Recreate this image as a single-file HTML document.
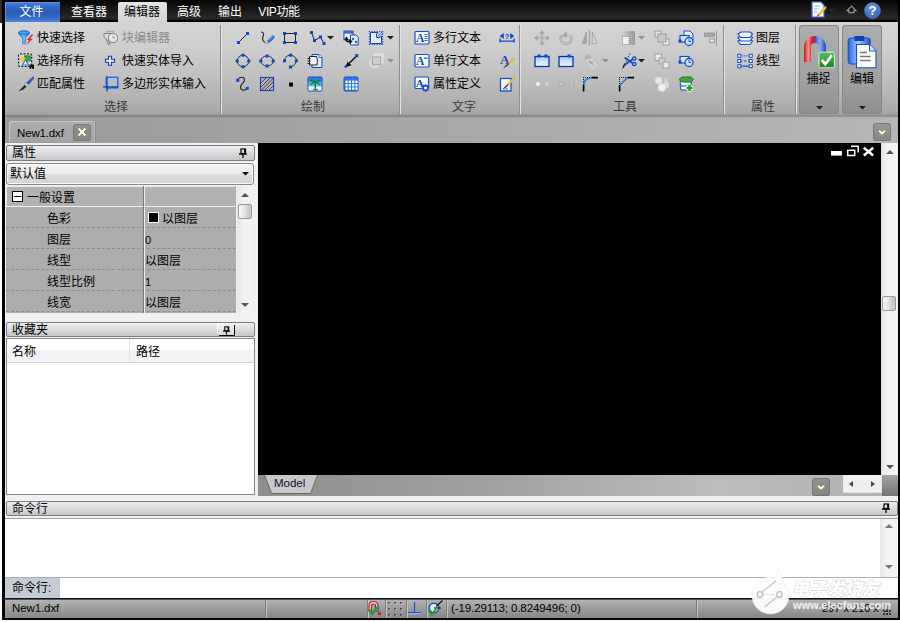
<!DOCTYPE html>
<html lang="zh"><head><meta charset="utf-8"><title>New1.dxf</title>
<style>
html,body{margin:0;padding:0;background:#fff;}
body{width:900px;height:622px;position:relative;overflow:hidden;font-family:"Liberation Sans","Noto Sans CJK SC",sans-serif;font-size:12px;color:#000;}
.a{position:absolute;}
svg{position:absolute;overflow:visible;}
#frame{left:2px;top:0;width:898px;height:620px;background:#000;}
#title{left:5px;top:0;width:893px;height:22px;background:linear-gradient(#050505,#161616 40%,#2a2a2a 85%,#000 95%);}
.tab{top:2px;height:20px;line-height:21px;color:#fff;text-align:center;font-size:12px;}
#ribbon{left:5px;top:22px;width:893px;height:94px;background:linear-gradient(#d4d4d4,#cecece 28%,#bcbcbc 65%,#a9a9a9 95%,#9a9a9a);box-shadow:inset 0 -1px 0 #8a8a8a;}
#docbar{left:5px;top:116px;width:893px;height:27px;background:linear-gradient(rgba(0,0,0,.22),rgba(0,0,0,0) 7%),linear-gradient(90deg,#9a9a9a,#a6a6a6 45%,#b6b6b6);}
.sep{top:25px;width:1px;height:89px;background:#8e8e8e;box-shadow:1px 0 0 #e2e2e2;}
.rt{height:16px;line-height:16px;font-size:12px;white-space:nowrap;}
.gl{top:100px;height:15px;line-height:15px;font-size:12px;color:#3a3a3a;text-align:center;width:60px;margin-left:-30px;}
.big{top:25px;width:40px;height:89px;border-radius:4px;background:linear-gradient(#adadad,#a2a2a2 60%,#8f8f8f);box-shadow:inset 0 0 0 1px #888;}
.hdr{height:14px;line-height:14px;background:linear-gradient(#ededed,#dcdee0 45%,#c3c6ca);border:1px solid #7d7d7d;border-radius:2px;font-size:12px;padding-left:5px;box-sizing:content-box;}
#main{left:5px;top:143px;width:893px;height:455px;background:#f0f0f0;}
.row{left:7px;width:229px;height:20px;background:#adadad;border-bottom:1px dashed #8c8c8c;}
.pl{left:47px;font-size:12px;height:20px;line-height:20px;}
.pv{left:145px;font-size:12px;height:20px;line-height:20px;}
.sb{background:#f0f0f0;}
.arr{width:0;height:0;border:4px solid transparent;}

</style></head><body>
<div id="frame" class="a"></div>
<div id="title" class="a"></div>
<div class="a" style="left:0;top:0;width:2px;height:23px;background:#2e2e2e"></div>
<div class="a tab" style="left:5px;width:55px;height:20px;background:linear-gradient(#4582de,#3269c4 25%,#2a5cb2 55%,#3a72cc 85%,#4e88de);box-shadow:inset 1px 1px 0 #5a92e8;text-indent:-2px">文件</div>
<div class="a tab" style="left:64px;width:50px;">查看器</div>
<div class="a tab" style="left:118px;width:49px;text-indent:-1px;background:linear-gradient(#e4e4e4,#d3d3d3);color:#000;border-radius:2px 2px 0 0;">编辑器</div>
<div class="a tab" style="left:170px;width:38px;">高级</div>
<div class="a tab" style="left:212px;width:36px;">输出</div>
<div class="a tab" style="left:255px;width:48px;letter-spacing:-.4px">VIP功能</div>
<svg style="left:809px;top:1px" width="18" height="18" viewBox="0 0 18 18" preserveAspectRatio="none"><path d="M3 1H12L15 4V16H3Z" fill="#f8fbff" stroke="#3a6ae0" stroke-width="1.2"/><path d="M5 5H11M5 8H10M5 11H8" stroke="#9ab8f0" stroke-width="1"/><path d="M16.5 5L17.5 7L10.5 14.5L9 13Z" fill="#f4d020" stroke="#b89000" stroke-width=".4"/><path d="M9 13L10.5 14.5L7.5 16Z" fill="#e03020"/></svg>
<div class="a arr" style="left:828px;top:9px;border-width:3.5px;border-top-color:#2c2c2c"></div>
<svg style="left:846px;top:5px" width="11" height="9" viewBox="0 0 11 9" preserveAspectRatio="none"><path d="M1 5.6L5.5 1L10 5.6H8V7.6H3V5.6Z" fill="none" stroke="#959595" stroke-width="1.1" stroke-linejoin="miter"/></svg>
<svg style="left:863.5px;top:1.5px" width="17" height="17" viewBox="0 0 18 18" preserveAspectRatio="none"><defs><radialGradient id="hg" cx=".4" cy=".3" r=".8"><stop offset="0" stop-color="#6a98e0"/><stop offset="1" stop-color="#2f5cb8"/></radialGradient></defs><circle cx="9" cy="9" r="8.3" fill="url(#hg)" stroke="#5a8ae0" stroke-width=".8"/><text x="9" y="14" text-anchor="middle" font-family="Liberation Sans,sans-serif" font-weight="bold" font-size="14" fill="#fff">?</text></svg>
<div id="ribbon" class="a"></div>
<div id="docbar" class="a"></div>
<div class="a sep" style="left:220px"></div>
<div class="a sep" style="left:399px"></div>
<div class="a sep" style="left:519px"></div>
<div class="a sep" style="left:723px"></div>
<div class="a sep" style="left:795px"></div>
<svg style="left:18px;top:30px" width="16" height="16" viewBox="0 0 16 16" preserveAspectRatio="none"><defs><linearGradient id="fg" x1="0" x2="1"><stop offset="0" stop-color="#1d7fe0"/><stop offset=".5" stop-color="#6fc0ff"/><stop offset="1" stop-color="#1a62c8"/></linearGradient></defs><ellipse cx="6" cy="3" rx="5.5" ry="2.3" fill="#3aa0f0" stroke="#1560c0" stroke-width=".8"/><path d="M.8 3.6L4.6 8.5V13.5Q6 14.6 7.4 13.5V8.5L11.2 3.6Q6 6 .8 3.6Z" fill="url(#fg)" stroke="#1560c0" stroke-width=".6"/><path d="M13.5 4.5L8.8 10H11.2L8 15.5L14.8 8.8H12.2L15.3 4.5Z" fill="#e8232a"/></svg>
<div class="a rt" style="left:37px;top:29.5px;color:#000;font-size:12px;">快速选择</div>
<svg style="left:18px;top:53px" width="16" height="16" viewBox="0 0 16 16" preserveAspectRatio="none"><rect x=".6" y=".8" width="13" height="12.6" rx="1.5" fill="#d8d8d8" stroke="#222" stroke-width="1.2" stroke-dasharray="2 1.4"/><rect x="6.5" y="2.8" width="6" height="5.2" fill="#2fa84a" stroke="#1d7a30" stroke-width=".6"/><circle cx="4.8" cy="6.3" r="2.6" fill="#f5d020"/><path d="M4.5 12L7.5 6.5L10.5 12Z" fill="#fff" stroke="#2a78e0" stroke-width="1.2"/><path d="M11.5 11.5H16V16H14.8L13 14.2V16H11.5Z" fill="#111"/></svg>
<div class="a rt" style="left:37px;top:52.5px;color:#000;font-size:12px;">选择所有</div>
<svg style="left:18px;top:76px" width="16" height="16" viewBox="0 0 16 16" preserveAspectRatio="none"><path d="M15.2 .6L16 2.2L10.5 8.5L8.3 7Z" fill="#2e5fc4" stroke="#1a3d92" stroke-width=".5"/><path d="M8.3 7L10.5 8.5L8.5 10.5L6.5 9Z" fill="#cfd4dc" stroke="#777" stroke-width=".4"/><path d="M6.5 9L8.5 10.5Q6 14 .5 15.2Q3.5 12.5 6.5 9Z" fill="#2a2a2a"/></svg>
<div class="a rt" style="left:37px;top:75.5px;color:#000;font-size:12px;">匹配属性</div>
<svg style="left:103px;top:30px" width="16" height="16" viewBox="0 0 16 16" preserveAspectRatio="none"><path d="M1 3.5H8V7L5 8.5L7 14L5.5 14.8L3.5 9.5L1 7Z" fill="#dedede" stroke="#7e7e7e" stroke-width="1"/><circle cx="10" cy="8" r="4.6" fill="#e8e8e8" stroke="#8a8a8a" stroke-width="1.1"/><path d="M10 5.5V8H12" stroke="#9a9a9a" stroke-width="1" fill="none"/><path d="M3 1.5H11" stroke="#a8a8a8" stroke-width="1.4"/></svg>
<div class="a rt" style="left:122px;top:29.5px;color:#8a8a8a;font-size:12px;">块编辑器</div>
<svg style="left:103px;top:53px" width="16" height="16" viewBox="0 0 16 16" preserveAspectRatio="none"><path d="M5.5 3.2H8.5V6.2H11.5V9.2H8.5V12.2H5.5V9.2H2.5V6.2H5.5Z" fill="#eef3ff" stroke="#0f3cc0" stroke-width="1.15"/></svg>
<div class="a rt" style="left:122px;top:52.5px;color:#000;font-size:12px;">快速实体导入</div>
<svg style="left:103px;top:76px" width="16" height="16" viewBox="0 0 16 16" preserveAspectRatio="none"><rect x="3.3" y="1.3" width="11.4" height="10.6" fill="none" stroke="#2a6ae0" stroke-width="1.5"/><rect x="4.8" y="2.8" width="8.4" height="7.6" fill="none" stroke="#a8c8ff" stroke-width=".9"/><path d="M0 10.8H15.5M4 .5V15.5" stroke="#0f3cc0" stroke-width="1.2"/></svg>
<div class="a rt" style="left:122px;top:75.5px;color:#000;font-size:12px;">多边形实体输入</div>
<div class="a gl" style="left:116px">选择</div>
<div class="a gl" style="left:313px">绘制</div>
<div class="a gl" style="left:464px">文字</div>
<div class="a gl" style="left:625px">工具</div>
<div class="a gl" style="left:763px">属性</div>
<svg style="left:235px;top:30px" width="16" height="16" viewBox="0 0 16 16" preserveAspectRatio="none"><path d="M3.5 12.5L12.5 3.5" stroke="#222" stroke-width="1"/><rect x="2" y="11" width="3" height="3" fill="#0a46d8"/><rect x="11" y="2" width="3" height="3" fill="#0a46d8"/></svg>
<svg style="left:259px;top:30px" width="16" height="16" viewBox="0 0 16 16" preserveAspectRatio="none"><path d="M2 2Q6 2.5 4 6.5Q2.5 10 6 12.5" stroke="#222" stroke-width="1.1" fill="none"/><path d="M8 11.5L13.5 5L15.8 7L10 13.2Z" fill="#2a7ae8" stroke="#1850b8" stroke-width=".5"/><path d="M8 11.5L10 13.2L6.8 14.3Z" fill="#f4d0b0"/><path d="M7.6 12.8L8.8 13.8L6.8 14.3Z" fill="#e02020"/><path d="M10 9.5L13.8 5.3" stroke="#a8d0ff" stroke-width=".9"/></svg>
<svg style="left:282px;top:30px" width="16" height="16" viewBox="0 0 16 16" preserveAspectRatio="none"><rect x="2.5" y="3.5" width="11" height="9" fill="none" stroke="#222" stroke-width="1"/><rect x="1" y="2" width="3" height="3" fill="#0a46d8"/><rect x="12" y="2" width="3" height="3" fill="#0a46d8"/><rect x="1" y="11" width="3" height="3" fill="#0a46d8"/><rect x="12" y="11" width="3" height="3" fill="#0a46d8"/></svg>
<svg style="left:309px;top:30px" width="16" height="16" viewBox="0 0 16 16" preserveAspectRatio="none"><path d="M2.5 2.5L5.5 10.5L11.5 7L15 13.5" stroke="#222" stroke-width="1" fill="none"/><rect x="1" y="1" width="3" height="3" fill="#0a46d8"/><rect x="4" y="9" width="3" height="3" fill="#0a46d8"/><rect x="10" y="5.5" width="3" height="3" fill="#0a46d8"/><rect x="13.5" y="12" width="3" height="3" fill="#0a46d8"/></svg>
<svg style="left:326.5px;top:36px" width="7" height="4" viewBox="0 0 7 4" preserveAspectRatio="none"><path d="M0 0H7L3.5 3.5Z" fill="#1a1a1a"/></svg>
<svg style="left:343px;top:30px" width="16" height="16" viewBox="0 0 16 16" preserveAspectRatio="none"><rect x="1" y="1" width="9" height="9" fill="#eaf2ff" stroke="#1448c8" stroke-width="1"/><rect x="1" y="1" width="9" height="2.6" fill="#2a6ae0"/><rect x="8" y="1" width="2" height="2" fill="#e02020"/><path d="M7.5 5H13L15.2 7.2V15H7.5Z" fill="#f2f6ff" stroke="#1448c8" stroke-width="1"/><rect x="8.8" y="7.8" width="2.4" height="2.4" fill="#2a6ae0"/><rect x="11.8" y="10.8" width="2.4" height="2.4" fill="#2a6ae0"/><path d="M3.5 11.5V8M1.8 9.8L3.5 7.5L5.2 9.8M3.5 11.5H8M6.5 9.8L8.6 11.5L6.5 13.2" stroke="#111" stroke-width="1.3" fill="none"/></svg>
<svg style="left:368px;top:30px" width="16" height="16" viewBox="0 0 16 16" preserveAspectRatio="none"><path d="M2.5 2.5H10L8.5 4V7.5H12L13.5 6V13.5H2.5Z" fill="#e8f0ff" stroke="#1448c8" stroke-width="1"/><path d="M1 1.5H15M1 14.5H15M1.5 1V15M14.5 1V15" stroke="#1448c8" stroke-width="1.2" stroke-dasharray="1.2 1.3" fill="none"/><path d="M10 6L15 1M11.5 7L15.5 3" stroke="#2a6ae0" stroke-width=".9"/></svg>
<svg style="left:386.5px;top:36px" width="7" height="4" viewBox="0 0 7 4" preserveAspectRatio="none"><path d="M0 0H7L3.5 3.5Z" fill="#1a1a1a"/></svg>
<svg style="left:235px;top:53px" width="16" height="16" viewBox="0 0 16 16" preserveAspectRatio="none"><circle cx="8" cy="8" r="5.8" fill="none" stroke="#333" stroke-width="1"/><rect x="6.5" y="0.7" width="3" height="3" fill="#0a46d8"/><rect x="6.5" y="12.3" width="3" height="3" fill="#0a46d8"/><rect x="0.7" y="6.5" width="3" height="3" fill="#0a46d8"/><rect x="12.3" y="6.5" width="3" height="3" fill="#0a46d8"/></svg>
<svg style="left:259px;top:53px" width="16" height="16" viewBox="0 0 16 16" preserveAspectRatio="none"><ellipse cx="8" cy="8" rx="6.3" ry="5" fill="none" stroke="#333" stroke-width="1"/><rect x="6.5" y="1.5" width="3" height="3" fill="#0a46d8"/><rect x="6.5" y="11.5" width="3" height="3" fill="#0a46d8"/><rect x="0.3" y="6.5" width="3" height="3" fill="#0a46d8"/><rect x="12.7" y="6.5" width="3" height="3" fill="#0a46d8"/></svg>
<svg style="left:282px;top:53px" width="16" height="16" viewBox="0 0 16 16" preserveAspectRatio="none"><path d="M2.5 8Q3 2.2 8.5 2.2Q14.5 3 14.3 8Q13.5 12.5 8.5 14" fill="none" stroke="#333" stroke-width="1"/><rect x="1" y="6.3" width="3" height="3" fill="#0a46d8"/><rect x="7" y="0.7" width="3" height="3" fill="#0a46d8"/><rect x="12.8" y="6.3" width="3" height="3" fill="#0a46d8"/><rect x="7" y="12.5" width="3" height="3" fill="#0a46d8"/></svg>
<svg style="left:307px;top:53px" width="16" height="16" viewBox="0 0 16 16" preserveAspectRatio="none"><path d="M5 1.5H12L15 4.5V14.5H5Z" fill="#dfe9ff" stroke="#1448c8" stroke-width="1"/><path d="M12 1.5V4.5H15" fill="#fff" stroke="#1448c8" stroke-width=".8"/><path d="M2.5 3.5H9.5Q11 6.5 10 12H2.5Z" fill="#f4f4f4" stroke="#222" stroke-width="1"/><path d="M.5 5.5H3.5M.5 8H3.5M.5 10.5H3.5" stroke="#222" stroke-width="1.1"/></svg>
<svg style="left:343px;top:53px" width="16" height="16" viewBox="0 0 16 16" preserveAspectRatio="none"><path d="M3 13.5L13.5 3" stroke="#111" stroke-width="1.4"/><path d="M2.2 14.2L4.5 8.8L8.6 12.2Z" fill="#111"/><rect x="12.3" y="1.1" width="3" height="3" fill="#0a46d8"/><rect x="1.5" y="12.5" width="2.2" height="2.2" fill="#0a46d8"/></svg>
<svg style="left:368px;top:53px" width="16" height="16" viewBox="0 0 16 16" preserveAspectRatio="none"><rect x="6" y="1" width="9" height="9" fill="#d9d9d9" stroke="#e8e8e8" stroke-width="1"/><circle cx="6.5" cy="10" r="5" fill="#d2d2d2" stroke="#e4e4e4" stroke-width="1"/><rect x="4.5" y="4" width="8" height="7.5" fill="#cfcfcf" stroke="#a4a4a4" stroke-width=".9"/></svg>
<svg style="left:386.5px;top:59px" width="7" height="4" viewBox="0 0 7 4" preserveAspectRatio="none"><path d="M0 0H7L3.5 3.5Z" fill="#8f8f8f"/></svg>
<svg style="left:235px;top:76px" width="16" height="16" viewBox="0 0 16 16" preserveAspectRatio="none"><path d="M3 3.5Q4.5 .5 8 1.5Q11 3 8 7Q4.5 10 6 13Q8.5 15.5 11.5 13" fill="none" stroke="#222" stroke-width="1.1"/><rect x="1.2" y="2.8" width="3" height="3" fill="#0a46d8"/><rect x="10.8" y="10.8" width="3" height="3" fill="#0a46d8"/></svg>
<svg style="left:259px;top:76px" width="16" height="16" viewBox="0 0 16 16" preserveAspectRatio="none"><rect x="1.5" y="1.5" width="13" height="13" fill="#b4b4b4" stroke="#1448c8" stroke-width="1.2"/><path d="M2 7L7 2M2 11L11 2M2 14.5L14.5 2M5.5 14.5L14.5 5.5M9.5 14.5L14.5 9.5" stroke="#444" stroke-width="1"/></svg>
<svg style="left:283px;top:76px" width="16" height="16" viewBox="0 0 16 16" preserveAspectRatio="none"><rect x="6" y="6.5" width="4" height="4" fill="#000"/></svg>
<svg style="left:307px;top:76px" width="16" height="16" viewBox="0 0 16 16" preserveAspectRatio="none"><rect x="1" y="1" width="14" height="14" rx="1" fill="#2a8ae0" stroke="#1448c8" stroke-width="1"/><rect x="1.5" y="5" width="13" height="4.5" fill="#4fb0f0"/><rect x="1.5" y="9.5" width="13" height="2" fill="#a8dcf8"/><rect x="1.5" y="11" width="13" height="3.5" fill="#f2f8ff"/><path d="M8.3 6V13.5" stroke="#0f7a3a" stroke-width="1.5"/><path d="M8.3 5.5Q5 2 3 5Q6 4.5 8.3 6Q11 2.5 13.8 5.5Q10.5 4.5 8.3 6Q4 6 4 9Q6 6.5 8.3 6.3Q11 6.5 12.8 9.2Q12 6 8.3 5.8Z" fill="#0f8a3e" stroke="#0f7a3a" stroke-width=".8"/><path d="M6 13.8H11" stroke="#0f7a3a" stroke-width="1.2"/></svg>
<svg style="left:343px;top:76px" width="16" height="16" viewBox="0 0 16 16" preserveAspectRatio="none"><rect x="1" y="1" width="14" height="14" rx="1.5" fill="#2a7ae8" stroke="#1650c8" stroke-width="1"/><rect x="2.4" y="4.6" width="2.3" height="2.4" fill="#f4f8ff"/><rect x="2.4" y="8" width="2.3" height="2.4" fill="#f4f8ff"/><rect x="2.4" y="11.4" width="2.3" height="2.4" fill="#f4f8ff"/><rect x="5.7" y="4.6" width="2.3" height="2.4" fill="#f4f8ff"/><rect x="5.7" y="8" width="2.3" height="2.4" fill="#f4f8ff"/><rect x="5.7" y="11.4" width="2.3" height="2.4" fill="#f4f8ff"/><rect x="9" y="4.6" width="2.3" height="2.4" fill="#f4f8ff"/><rect x="9" y="8" width="2.3" height="2.4" fill="#f4f8ff"/><rect x="9" y="11.4" width="2.3" height="2.4" fill="#f4f8ff"/><rect x="12.3" y="4.6" width="2.3" height="2.4" fill="#f4f8ff"/><rect x="12.3" y="8" width="2.3" height="2.4" fill="#f4f8ff"/><rect x="12.3" y="11.4" width="2.3" height="2.4" fill="#f4f8ff"/></svg>
<svg style="left:414px;top:30px" width="16" height="16" viewBox="0 0 16 16" preserveAspectRatio="none"><rect x="1" y="1.5" width="14" height="12.5" rx="1" fill="#f4f8ff" stroke="#1650c8" stroke-width="1.2"/><text x="2" y="12.2" font-family="Liberation Serif,serif" font-weight="bold" font-size="11.5" fill="#1448b8">A</text><path d="M10.5 4.5H13.5M10.5 6.5H13.5M10.5 8.5H13.5M10.5 10.5H13.5" stroke="#2a6ae0" stroke-width="1"/></svg>
<div class="a rt" style="left:433px;top:29.5px;color:#000;font-size:12px;">多行文本</div>
<svg style="left:414px;top:53px" width="16" height="16" viewBox="0 0 16 16" preserveAspectRatio="none"><rect x="1" y="1.5" width="14" height="12.5" rx="1" fill="#f4f8ff" stroke="#1650c8" stroke-width="1.2"/><text x="2" y="12.2" font-family="Liberation Serif,serif" font-weight="bold" font-size="11.5" fill="#1448b8">A</text><path d="M10 5.2H13.5" stroke="#2a6ae0" stroke-width="1.4"/></svg>
<div class="a rt" style="left:433px;top:52.5px;color:#000;font-size:12px;">单行文本</div>
<svg style="left:414px;top:76px" width="16" height="16" viewBox="0 0 16 16" preserveAspectRatio="none"><rect x="1" y="1" width="13.5" height="11.5" rx="1" fill="#f4f8ff" stroke="#1650c8" stroke-width="1.2"/><text x="1.8" y="10.8" font-family="Liberation Serif,serif" font-weight="bold" font-size="11" fill="#1448b8">A</text><circle cx="11.5" cy="12" r="2.4" fill="#fff" stroke="#1650c8" stroke-width="1.5"/><path d="M11.5 8V16M7.5 12H15.5M8.7 9.2L14.3 14.8M14.3 9.2L8.7 14.8" stroke="#1650c8" stroke-width="1.1"/><circle cx="11.5" cy="12" r="1.5" fill="#fff"/></svg>
<div class="a rt" style="left:433px;top:75.5px;color:#000;font-size:12px;">属性定义</div>
<svg style="left:499px;top:30px" width="16" height="16" viewBox="0 0 16 16" preserveAspectRatio="none"><path d="M1 8.5V12.6M15 8.5V12.6M1 11.2H15" stroke="#1448c8" stroke-width="1.3" fill="none"/><path d="M.6 6L4.8 3V9ZM15.4 6L11.2 3V9Z" fill="#1448c8"/><text x="8" y="8.8" text-anchor="middle" font-family="Liberation Sans,sans-serif" font-weight="bold" font-size="7.5" fill="#1448c8">?</text></svg>
<svg style="left:499px;top:53px" width="16" height="16" viewBox="0 0 16 16" preserveAspectRatio="none"><text x="1" y="11" font-family="Liberation Serif,serif" font-weight="bold" font-size="13" fill="#1448b8">A</text><path d="M15.3 4.5L16 6L10.5 11L9 9.8Z" fill="#f4d020" stroke="#b89000" stroke-width=".4"/><path d="M9 9.8L10.5 11L9.3 12L8 11Z" fill="#e03020"/><path d="M8 11L9.3 12Q7 14.5 4 15Q6 13 8 11Z" fill="#223a78"/></svg>
<svg style="left:499px;top:76px" width="16" height="16" viewBox="0 0 16 16" preserveAspectRatio="none"><rect x="1.5" y="2.5" width="10.5" height="12.5" fill="#f4f8ff" stroke="#1650c8" stroke-width="1.3"/><path d="M15 .8L16 2.5L10 9L8.5 7.7Z" fill="#f4d020" stroke="#b89000" stroke-width=".4"/><path d="M8.5 7.7L10 9L8.8 10L7.5 9Z" fill="#e03020"/><path d="M7.5 9L8.8 10Q6.5 12.5 3.5 13Q5.5 11 7.5 9Z" fill="#223a78"/><path d="M4 13H9" stroke="#1650c8" stroke-width=".8"/></svg>
<svg style="left:534px;top:30px" width="16" height="16" viewBox="0 0 16 16" preserveAspectRatio="none"><path d="M8 1.5V14.5M1.5 8H14.5M5.8 3.8L8 1.2L10.2 3.8M5.8 12.2L8 14.8L10.2 12.2M3.8 5.8L1.2 8L3.8 10.2M12.2 5.8L14.8 8L12.2 10.2" fill="none" stroke="#a2a2a2" stroke-width="1.2"/></svg>
<svg style="left:558px;top:30px" width="16" height="16" viewBox="0 0 16 16" preserveAspectRatio="none"><path d="M3.6 5.5Q1.5 9.5 4.3 12.4Q8 15.2 11.7 12.4Q14.5 9.5 12.4 5" fill="none" stroke="#a6a6a6" stroke-width="2.7"/><path d="M3.6 6.5L8.8 1L9.2 7Z" fill="#a6a6a6"/><path d="M3.6 5.5Q1.5 9.5 4.3 12.4Q8 15.2 11.7 12.4Q14.5 9.5 12.4 5" fill="none" stroke="#d4d4d4" stroke-width=".9"/></svg>
<svg style="left:582px;top:30px" width="16" height="16" viewBox="0 0 16 16" preserveAspectRatio="none"><path d="M7.3 0V15.8" stroke="#9c9c9c" stroke-width="1"/><path d="M4.3 2V13.6H.2Z" fill="#a4a4a4" stroke="#9a9a9a" stroke-width=".6"/><path d="M10.3 2V13.6H15Z" fill="#d6d6d6" stroke="#a0a0a0" stroke-width=".8"/></svg>
<svg style="left:620px;top:30px" width="16" height="16" viewBox="0 0 16 16" preserveAspectRatio="none"><defs><linearGradient id="gs" x1="0" x2="1"><stop offset="0" stop-color="#cfcfcf"/><stop offset="1" stop-color="#9a9a9a"/></linearGradient></defs><rect x="2" y="1" width="13" height="14" fill="url(#gs)"/><rect x="2.5" y="6.5" width="6.5" height="8" fill="#f2f2f2" stroke="#8a8a8a" stroke-width="1" stroke-dasharray="1 1"/></svg>
<svg style="left:637.5px;top:36px" width="7" height="4" viewBox="0 0 7 4" preserveAspectRatio="none"><path d="M0 0H7L3.5 3.5Z" fill="#8f8f8f"/></svg>
<svg style="left:654px;top:30px" width="16" height="16" viewBox="0 0 16 16" preserveAspectRatio="none"><rect x="1" y="1" width="6" height="6" fill="#e0e0e0" stroke="#9c9c9c" stroke-width="1"/><rect x="9" y="9" width="6" height="6" fill="#ececec" stroke="#9c9c9c" stroke-width="1"/><rect x="4" y="4" width="8" height="8" fill="#c8c8c8" stroke="#9c9c9c" stroke-width="1"/></svg>
<svg style="left:678px;top:30px" width="16" height="16" viewBox="0 0 16 16" preserveAspectRatio="none"><path d="M6 1H12L15 4V10H6Z" fill="#e4eeff" stroke="#1650c8" stroke-width="1"/><rect x="2" y="5.5" width="9" height="6.5" fill="#dce8ff" stroke="#1650c8" stroke-width="1.2"/><rect x=".5" y="9.5" width="3" height="3" fill="#1448c8"/><circle cx="11" cy="11.5" r="4" fill="#cfe0ff" stroke="#1650c8" stroke-width="1.3"/><path d="M11 9V11.5H13" stroke="#1650c8" stroke-width="1" fill="none"/></svg>
<svg style="left:702px;top:30px" width="16" height="16" viewBox="0 0 16 16" preserveAspectRatio="none"><path d="M14.5 .5V15.5" stroke="#9a9a9a" stroke-width="1"/><rect x="2.5" y="3" width="10" height="3.5" fill="#a6a6a6" stroke="#959595" stroke-width=".8"/><rect x="7.5" y="9" width="5" height="3.5" fill="#e0e0e0" stroke="#959595" stroke-width=".9"/></svg>
<svg style="left:534px;top:53px" width="16" height="16" viewBox="0 0 16 16" preserveAspectRatio="none"><defs><linearGradient id="br" x1="0" y1="0" x2="0" y2="1"><stop offset="0" stop-color="#a8ccff"/><stop offset="1" stop-color="#f2f7ff"/></linearGradient></defs><rect x="1" y="3.5" width="14" height="10" fill="url(#br)" stroke="#0a32b0" stroke-width="1.3"/><rect x="3.5" y="1.5" width="3" height="3" fill="#0a46d8"/><rect x="10.5" y="1.5" width="3" height="3" fill="#0a46d8"/></svg>
<svg style="left:558px;top:53px" width="16" height="16" viewBox="0 0 16 16" preserveAspectRatio="none"><rect x="1" y="3.5" width="14" height="10" fill="url(#br)" stroke="#0a32b0" stroke-width="1.3"/><rect x="9.5" y="1.5" width="3" height="3" fill="#0a46d8"/></svg>
<svg style="left:582px;top:53px" width="16" height="16" viewBox="0 0 16 16" preserveAspectRatio="none"><circle cx="6" cy="4.5" r="3.8" fill="#b4b4b4" stroke="#cdcdcd" stroke-width="1"/><path d="M4.5 7.5L8.5 6L14.5 12.5L11.5 15.5Z" fill="#c6c6c6" stroke="#e2e2e2" stroke-width="1"/><path d="M7 8L9 10.5L11 9.5" stroke="#8e8e8e" stroke-width="1" fill="none"/></svg>
<svg style="left:601.5px;top:59px" width="7" height="4" viewBox="0 0 7 4" preserveAspectRatio="none"><path d="M0 0H7L3.5 3.5Z" fill="#8f8f8f"/></svg>
<svg style="left:621px;top:53px" width="16" height="16" viewBox="0 0 16 16" preserveAspectRatio="none"><path d="M9 .5L1.5 15.5" stroke="#333" stroke-width="1" stroke-dasharray="1.5 1.2"/><path d="M2 14.8L4 10.8" stroke="#111" stroke-width="1.4"/><path d="M3.5 4.5L12 10.5M3.5 12L12 6" stroke="#1448c8" stroke-width="1.6"/><circle cx="13.2" cy="5.5" r="1.7" fill="none" stroke="#1448c8" stroke-width="1.3"/><circle cx="13.2" cy="11" r="1.7" fill="none" stroke="#1448c8" stroke-width="1.3"/></svg>
<svg style="left:637.5px;top:59px" width="7" height="4" viewBox="0 0 7 4" preserveAspectRatio="none"><path d="M0 0H7L3.5 3.5Z" fill="#1a1a1a"/></svg>
<svg style="left:654px;top:53px" width="16" height="16" viewBox="0 0 16 16" preserveAspectRatio="none"><rect x="1" y="1" width="6.5" height="6.5" fill="#ececec" stroke="#9c9c9c" stroke-width="1"/><rect x="5" y="5" width="6" height="6" fill="#d0d0d0" stroke="#a4a4a4" stroke-width="1"/><rect x="9" y="9" width="6" height="6" fill="#ececec" stroke="#9c9c9c" stroke-width="1"/></svg>
<svg style="left:678px;top:53px" width="16" height="16" viewBox="0 0 16 16" preserveAspectRatio="none"><rect x="2" y="3.5" width="9" height="6.5" fill="#dce8ff" stroke="#1650c8" stroke-width="1.2"/><rect x=".5" y="7.5" width="3" height="3" fill="#1448c8"/><circle cx="11" cy="9.5" r="4" fill="#cfe0ff" stroke="#1650c8" stroke-width="1.3"/><path d="M11 7V9.5H13" stroke="#1650c8" stroke-width="1" fill="none"/></svg>
<svg style="left:534px;top:76px" width="16" height="16" viewBox="0 0 16 16" preserveAspectRatio="none"><rect x="2" y="6" width="4" height="4" fill="#f4f4f4" stroke="#c4c4c4" stroke-width=".8"/><rect x="11" y="6" width="4" height="4" fill="#d6d6d6" stroke="#bcbcbc" stroke-width=".8"/><path d="M7 7H10M7 9H10" stroke="#bdbdbd" stroke-width=".8" stroke-dasharray="1 1"/></svg>
<svg style="left:558px;top:76px" width="16" height="16" viewBox="0 0 16 16" preserveAspectRatio="none"><rect x="1" y="6" width="5" height="3.5" fill="#c8c8c8" stroke="#aaa" stroke-width=".8"/><path d="M6.5 6.5H11M6.5 9H11" stroke="#b4b4b4" stroke-width=".8" stroke-dasharray="1 1"/><rect x="12" y="1" width="3" height="14" fill="#c4c4c4" stroke="#aeaeae" stroke-width=".7"/></svg>
<svg style="left:582px;top:76px" width="16" height="16" viewBox="0 0 16 16" preserveAspectRatio="none"><path d="M1.5 1V8.5M1 1.5H9.5" stroke="#111" stroke-width="1" stroke-dasharray="1 1" fill="none"/><path d="M1.6 8.5V15.6M9.5 1.6H16" stroke="#000" stroke-width="1.7"/><path d="M1.7 8.8Q2.2 2.2 9.6 1.7" stroke="#1a6ae8" stroke-width="1.4" fill="none"/></svg>
<svg style="left:618px;top:76px" width="16" height="16" viewBox="0 0 16 16" preserveAspectRatio="none"><path d="M1.5 1V8.5M1 1.5H9.5" stroke="#111" stroke-width="1" stroke-dasharray="1 1" fill="none"/><path d="M1.6 9V15.6M9.5 1.6H16" stroke="#000" stroke-width="1.7"/><path d="M1.7 9.2L9.4 1.8" stroke="#1a6ae8" stroke-width="1.4" fill="none"/></svg>
<svg style="left:654px;top:76px" width="16" height="16" viewBox="0 0 16 16" preserveAspectRatio="none"><circle cx="4.5" cy="4.5" r="3.6" fill="#e8e8e8" stroke="#cfcfcf" stroke-width=".8"/><circle cx="12" cy="4" r="2.2" fill="#cfcfcf"/><circle cx="12" cy="9" r="3.2" fill="#e0e0e0" stroke="#cacaca" stroke-width=".8"/><circle cx="8" cy="11.5" r="4" fill="#f0f0f0" stroke="#d0d0d0" stroke-width=".8"/></svg>
<svg style="left:678px;top:76px" width="16" height="16" viewBox="0 0 16 16" preserveAspectRatio="none"><path d="M2 9L4 7H12L14 9L12 14H3Z" fill="#f4f8ff" stroke="#1650c8" stroke-width="1"/><path d="M2 6L4 4.5H12L14 6L12 10H3Z" fill="#f4f8ff" stroke="#1650c8" stroke-width="1"/><path d="M1 3.5L4 1H13L15.5 3.5L13 6H3.5Z" fill="#3aa83a" stroke="#1d7a1d" stroke-width="1"/><path d="M11.5 8.5V15.5M8 12H15" stroke="#fff" stroke-width="4"/><path d="M11.5 9V15M8.5 12H14.5" stroke="#18a018" stroke-width="2.4"/></svg>
<svg style="left:737px;top:30px" width="16" height="16" viewBox="0 0 16 16" preserveAspectRatio="none"><path d="M1 11L4 9.5H13L15.5 11L13 14.5H3.5Z" fill="#f4f8ff" stroke="#1650c8" stroke-width="1.2"/><path d="M1 7.5L4 6H13L15.5 7.5L13 11H3.5Z" fill="#f4f8ff" stroke="#1650c8" stroke-width="1.2"/><path d="M1 4L4 2H13L15.5 4L13 7.5H3.5Z" fill="#f4f8ff" stroke="#1650c8" stroke-width="1.2"/></svg>
<div class="a rt" style="left:756px;top:29.5px;color:#000;font-size:12px;">图层</div>
<svg style="left:737px;top:53px" width="16" height="16" viewBox="0 0 16 16" preserveAspectRatio="none"><path d="M3 2.8H13" stroke="#1650c8" stroke-width="1.2" stroke-dasharray="1 1.2"/><rect x=".8" y="1.2999999999999998" width="3" height="3" fill="#fff" stroke="#1650c8" stroke-width="1"/><rect x="12.2" y="1.2999999999999998" width="3" height="3" fill="#fff" stroke="#1650c8" stroke-width="1"/><path d="M3 8H13" stroke="#1650c8" stroke-width="1.2" stroke-dasharray="2.5 1.5"/><rect x=".8" y="6.5" width="3" height="3" fill="#fff" stroke="#1650c8" stroke-width="1"/><rect x="12.2" y="6.5" width="3" height="3" fill="#fff" stroke="#1650c8" stroke-width="1"/><path d="M3 13.2H13" stroke="#1650c8" stroke-width="1.2" /><rect x=".8" y="11.7" width="3" height="3" fill="#fff" stroke="#1650c8" stroke-width="1"/><rect x="12.2" y="11.7" width="3" height="3" fill="#fff" stroke="#1650c8" stroke-width="1"/></svg>
<div class="a rt" style="left:756px;top:52.5px;color:#000;font-size:12px;">线型</div>
<div class="a big" style="left:799px"></div>
<div class="a big" style="left:842px"></div>
<svg style="left:802px;top:35px" width="34" height="34" viewBox="0 0 34 34" preserveAspectRatio="none"><defs><linearGradient id="mg" x1="0" x2="1"><stop offset="0" stop-color="#d41414"/><stop offset=".2" stop-color="#f49090"/><stop offset=".36" stop-color="#d82020"/><stop offset=".5" stop-color="#c02030"/><stop offset=".5" stop-color="#2858d0"/><stop offset=".72" stop-color="#8fb0f4"/><stop offset="1" stop-color="#1844c4"/></linearGradient><linearGradient id="gc" x1="0" y1="0" x2="0" y2="1"><stop offset="0" stop-color="#5cc05c"/><stop offset="1" stop-color="#178422"/></linearGradient></defs><path d="M2 27V12A11 11 0 0 1 24 12V27H17V12A4 4 0 0 0 9 12V27Z" fill="url(#mg)"/><rect x="17" y="17.2" width="15.4" height="15.5" rx="1.5" fill="url(#gc)" stroke="#dff2df" stroke-width=".9"/><path d="M19.8 24.8L23.3 29.2L29.8 20.2" stroke="#fff" stroke-width="2.7" fill="none"/></svg>
<svg style="left:846px;top:35px" width="32" height="34" viewBox="0 0 32 34" preserveAspectRatio="none"><defs><linearGradient id="pg" x1="0" x2="1"><stop offset="0" stop-color="#2a66dc"/><stop offset=".45" stop-color="#a4c8ff"/><stop offset="1" stop-color="#2058cc"/></linearGradient></defs><rect x="2.2" y="3" width="22" height="26" rx="2.5" fill="url(#pg)" stroke="#1448c8" stroke-width="1"/><rect x="8.3" y="1" width="10" height="5" rx=".8" fill="#0f3fc0"/><path d="M10.5 9.5H23.5L30 16V32.7H10.5Z" fill="#fcfdff" stroke="#1a4cc8" stroke-width="1.1"/><path d="M23.5 9.5V16H30" fill="#d8e6ff" stroke="#1a4cc8" stroke-width="1"/><path d="M14 17.5H21M14 21.5H24.5M14 25.5H24.5" stroke="#7a7a7a" stroke-width="1.7"/></svg>
<div class="a rt" style="left:799px;width:39px;text-align:center;top:71px">捕捉</div>
<div class="a rt" style="left:842px;width:40px;text-align:center;top:71px">编辑</div>
<svg style="left:816px;top:106px" width="7" height="4" viewBox="0 0 7 4" preserveAspectRatio="none"><path d="M0 0H7L3.5 3.5Z" fill="#1a1a1a"/></svg>
<svg style="left:859px;top:106px" width="7" height="4" viewBox="0 0 7 4" preserveAspectRatio="none"><path d="M0 0H7L3.5 3.5Z" fill="#1a1a1a"/></svg>
<div class="a" style="left:9px;top:120.5px;width:86px;height:21.5px;border-radius:3px 3px 0 0;background:linear-gradient(#adadad,#a3a3a3);box-shadow:inset 1px 1px 0 #c9c9c9,inset -1px 0 0 #c0c0c0, 1px 0 0 #8a8a8a;"></div>
<div class="a rt" style="left:17px;top:125px;font-size:11.5px;letter-spacing:-.15px">New1.dxf</div>
<div class="a" style="left:73px;top:123.5px;width:18px;height:17.5px;border-radius:3.5px;background:linear-gradient(#909090,#858585);box-shadow:inset 0 0 0 1px #7a7a7a;"></div>
<svg style="left:76.7px;top:126.8px" width="10" height="10" viewBox="0 0 10 10" preserveAspectRatio="none"><path d="M1.6 1.6L8.4 8.4M8.4 1.6L1.6 8.4" stroke="#85762a" stroke-width="3.2"/><path d="M1.6 1.6L8.4 8.4M8.4 1.6L1.6 8.4" stroke="#fffdf0" stroke-width="2.1"/></svg>
<div class="a" style="left:873px;top:123px;width:18px;height:18px;border-radius:3.5px;background:linear-gradient(#999,#858585);box-shadow:inset 0 0 0 1px #777;"></div>
<svg style="left:876.5px;top:129px" width="10" height="7" viewBox="0 0 10 7" preserveAspectRatio="none"><path d="M.8 2.2Q1.5 .5 3 1L5 2.8L7 1Q8.5 .5 9.2 2.2L5 6.3Z" fill="#fff" stroke="#8a7a28" stroke-width=".7"/></svg>
<div id="main" class="a"></div>
<div class="a" style="left:258px;top:143px;width:623px;height:332px;background:#000"></div>
<svg style="left:830px;top:144px" width="46" height="13" viewBox="0 0 46 13" preserveAspectRatio="none"><rect x="1" y="7" width="11" height="4.6" fill="#fff"/><rect x="17.7" y="6.3" width="7" height="5.2" fill="none" stroke="#fff" stroke-width="1.5"/><path d="M21 2.2H28.2V8.6" fill="none" stroke="#fff" stroke-width="1.5"/><path d="M33.8 3.8L43.2 11.5M43.2 3.8L33.8 11.5" stroke="#fff" stroke-width="2.6"/></svg>
<div class="a" style="left:881px;top:143px;width:17px;height:332px;background:linear-gradient(90deg,#e4e4e4,#f1f1f1 30%,#f3f3f3)"></div>
<div class="a arr" style="left:886px;top:149.5px;border-bottom-color:#555;border-top-width:0;border-bottom-width:4px"></div>
<div class="a arr" style="left:886px;top:465px;border-top-color:#555;border-bottom-width:0;border-top-width:4px"></div>
<div class="a" style="left:882px;top:296px;width:14px;height:15px;border:1px solid #9a9a9a;border-radius:2px;box-sizing:border-box;background:linear-gradient(90deg,#f6f6f6,#e4e4e4 45%,#c4c4c4 85%,#d0d0d0)"></div>
<div class="a" style="left:258px;top:475px;width:640px;height:21px;background:linear-gradient(90deg,#8e8e8e,#a0a0a0 35%,#bcbcbc 72%,#b0b0b0)"></div>
<div class="a" style="left:882px;top:475px;width:16px;height:21px;background:linear-gradient(#a5a5a5,#747474)"></div>
<svg style="left:262px;top:475px" width="60" height="20" viewBox="0 0 60 20"><path d="M2.5 0L9.5 18.5H48.5L55.5 0Z" fill="#c8c8c8"/><path d="M2.5 0L9.5 18.5H48.5L55.5 0" fill="none" stroke="#6a6a6a" stroke-width="1"/></svg>
<div class="a rt" style="left:274px;top:475px;font-size:11.5px;color:#101030">Model</div>
<div class="a" style="left:843px;top:475px;width:39px;height:18px;background:#efefef;box-shadow:inset -1px -1px 0 #e2e2e2"></div>
<div class="a arr" style="left:849px;top:480.5px;border-width:3.5px;border-right-color:#444;border-left-width:0;border-right-width:4px"></div>
<div class="a arr" style="left:871px;top:480.5px;border-width:3.5px;border-left-color:#444;border-right-width:0;border-left-width:4px"></div>
<div class="a" style="left:812px;top:478px;width:18px;height:18px;border-radius:3.5px;background:linear-gradient(#929292,#838383);box-shadow:inset 0 0 0 1px #757575;"></div>
<svg style="left:816px;top:484px" width="10" height="7" viewBox="0 0 10 7" preserveAspectRatio="none"><path d="M.8 2.2Q1.5 .5 3 1L5 2.8L7 1Q8.5 .5 9.2 2.2L5 6.3Z" fill="#fff" stroke="#8a7a28" stroke-width=".7"/></svg>
<div class="a hdr" style="left:6px;top:145px;width:242px">属性</div>
<svg style="left:239px;top:148px" width="8" height="10" viewBox="0 0 8 10" preserveAspectRatio="none"><rect x="2" y="1" width="4.5" height="4.5" fill="none" stroke="#000" stroke-width="1.2"/><path d="M5.8 1V5.5M0 6H8M4 6V10" stroke="#000" stroke-width="1.3"/></svg>
<div class="a" style="left:6px;top:163px;width:248px;height:22px;box-sizing:border-box;border:1px solid #8a8a8a;border-radius:3px;background:linear-gradient(#f4f4f4,#ebebeb 48%,#dddddd 52%,#d2d2d2);box-shadow:inset 0 0 0 1px #fafafa;font-size:12px;line-height:20px;padding-left:3px">默认值</div>
<svg style="left:241.5px;top:172px" width="7" height="4" viewBox="0 0 7 4" preserveAspectRatio="none"><path d="M0 0H7L3.5 3.5Z" fill="#000"/></svg>
<div class="a" style="left:6px;top:186px;width:230px;height:127px;background:#adadad"></div>
<div class="a" style="left:6px;top:186px;width:229px;height:20px;background:#b2b2b2;box-shadow:inset 1px 1px 0 #e8e8e8;border-bottom:1px solid #f0f0f0"></div>
<div class="a" style="left:12px;top:191px;width:9px;height:9px;border:1px solid #000;background:#fff"></div><div class="a" style="left:14px;top:196px;width:7px;height:1px;background:#000"></div>
<div class="a rt" style="left:27px;top:190px">一般设置</div>
<div class="a" style="left:6px;top:227px;width:230px;height:0;border-top:1px dashed #8d8d8d"></div>
<div class="a pl" style="top:208.5px">色彩</div>
<div class="a pv" style="left:162px;top:208.5px;">以图层</div>
<div class="a" style="left:6px;top:248px;width:230px;height:0;border-top:1px dashed #8d8d8d"></div>
<div class="a pl" style="top:229.5px">图层</div>
<div class="a pv" style="left:145px;top:229.5px;font-size:11px;">0</div>
<div class="a" style="left:6px;top:269px;width:230px;height:0;border-top:1px dashed #8d8d8d"></div>
<div class="a pl" style="top:250.5px">线型</div>
<div class="a pv" style="left:145px;top:250.5px;">以图层</div>
<div class="a" style="left:6px;top:290px;width:230px;height:0;border-top:1px dashed #8d8d8d"></div>
<div class="a pl" style="top:271.5px">线型比例</div>
<div class="a pv" style="left:145px;top:271.5px;font-size:11px;">1</div>
<div class="a" style="left:6px;top:311px;width:230px;height:0;border-top:1px dashed #8d8d8d"></div>
<div class="a pl" style="top:292.5px">线宽</div>
<div class="a pv" style="left:145px;top:292.5px;">以图层</div>
<div class="a" style="left:148px;top:212px;width:9px;height:9px;border:1px solid #fff;background:#000"></div>
<div class="a" style="left:143px;top:186px;width:1px;height:127px;background:#7a7a7a;box-shadow:1px 0 0 #ececec"></div>
<div class="a" style="left:237px;top:186px;width:16px;height:127px;background:linear-gradient(90deg,#e6e6e6,#f2f2f2 40%)"></div>
<div class="a arr" style="left:241.3px;top:193px;border-bottom-color:#555;border-top-width:0;border-bottom-width:4px"></div>
<div class="a arr" style="left:241.3px;top:303px;border-top-color:#555;border-bottom-width:0;border-top-width:4px"></div>
<div class="a" style="left:238px;top:204px;width:14px;height:15px;border:1px solid #9a9a9a;border-radius:2px;box-sizing:border-box;background:linear-gradient(90deg,#f6f6f6,#e4e4e4 45%,#c4c4c4 85%,#d0d0d0)"></div>
<div class="a hdr" style="left:6px;top:322px;width:242px;height:13px;line-height:15px">收藏夹</div>
<div class="a" style="left:218px;top:324px;width:16px;height:11px;background:linear-gradient(#f0f0f0,#d8dadc);box-shadow:1px 1px 0 #000, -1px -1px 0 #fff"></div>
<svg style="left:223px;top:326.25px" width="7" height="8.5" viewBox="0 0 8 10" preserveAspectRatio="none"><rect x="2" y="1" width="4.5" height="4.5" fill="none" stroke="#000" stroke-width="1.2"/><path d="M5.8 1V5.5M0 6H8M4 6V10" stroke="#000" stroke-width="1.3"/></svg>
<div class="a" style="left:6px;top:338px;width:249px;height:157px;box-sizing:border-box;border:1px solid #828790;background:#fff"></div>
<div class="a" style="left:7px;top:339px;width:247px;height:23px;background:linear-gradient(#fff,#fff 45%,#f3f4f6 50%,#f0f1f3);border-bottom:1px solid #d5d5d5"></div>
<div class="a" style="left:129px;top:339px;width:1px;height:23px;background:#e0e3e8"></div>
<div class="a rt" style="left:12px;top:344px">名称</div>
<div class="a rt" style="left:136px;top:344px">路径</div>
<div class="a hdr" style="left:6px;top:501px;width:885px;height:13px;line-height:15px">命令行</div>
<svg style="left:882px;top:503px" width="8" height="10" viewBox="0 0 8 10" preserveAspectRatio="none"><rect x="2" y="1" width="4.5" height="4.5" fill="none" stroke="#000" stroke-width="1.2"/><path d="M5.8 1V5.5M0 6H8M4 6V10" stroke="#000" stroke-width="1.3"/></svg>
<div class="a" style="left:5px;top:518px;width:893px;height:59px;background:#fff;border-top:1px solid #a0a0a0"></div>
<div class="a" style="left:880px;top:519px;width:17px;height:58px;background:linear-gradient(90deg,#e6e6e6,#f2f2f2 40%)"></div>
<div class="a arr" style="left:884.5px;top:524px;border-bottom-color:#777;border-top-width:0;border-bottom-width:4px"></div>
<div class="a arr" style="left:884.5px;top:565px;border-top-color:#777;border-bottom-width:0;border-top-width:4px"></div>
<div class="a" style="left:5px;top:577px;width:893px;height:21px;background:#fff;border-top:1px solid #a9afbf"></div>
<div class="a" style="left:5px;top:578px;width:55px;height:20px;background:#c6ccd6;line-height:20px;text-indent:7px">命令行:</div>
<div class="a" style="left:5px;top:598px;width:893px;height:20px;background:linear-gradient(#000,#2a2a2a 6%,#b2b2b2 11%,#9e9e9e 50%,#868686)"></div>
<div class="a rt" style="left:12px;top:600px;font-size:11.5px;letter-spacing:-.1px">New1.dxf</div>
<div class="a" style="left:265px;top:600px;width:1px;height:18px;background:#7c7c7c;box-shadow:1px 0 0 #c4c4c4"></div>
<div class="a" style="left:367px;top:600px;width:1px;height:18px;background:#7c7c7c;box-shadow:1px 0 0 #c4c4c4"></div>
<div class="a" style="left:385px;top:600px;width:1px;height:18px;background:#7c7c7c;box-shadow:1px 0 0 #c4c4c4"></div>
<div class="a" style="left:406px;top:600px;width:1px;height:18px;background:#7c7c7c;box-shadow:1px 0 0 #c4c4c4"></div>
<div class="a" style="left:426px;top:600px;width:1px;height:18px;background:#7c7c7c;box-shadow:1px 0 0 #c4c4c4"></div>
<div class="a" style="left:446px;top:600px;width:1px;height:18px;background:#7c7c7c;box-shadow:1px 0 0 #c4c4c4"></div>
<div class="a" style="left:696px;top:600px;width:1px;height:18px;background:#7c7c7c;box-shadow:1px 0 0 #c4c4c4"></div>
<svg style="left:366px;top:600px" width="16" height="16" viewBox="0 0 16 16" preserveAspectRatio="none"><path d="M3 11V6Q3 1.5 7.5 1.5Q12 1.5 12 6V11H9.5V6Q9.5 4 7.5 4Q5.5 4 5.5 6V11Z" fill="#d8d8e8" stroke="#c02020" stroke-width="1.2"/><path d="M9.5 6V11H12V6" fill="#a8c0f0" stroke="#2050c0" stroke-width="1"/><path d="M3 9.5L6 14L12 6.5" stroke="#18a028" stroke-width="2" fill="none"/><rect x="12" y="12" width="3" height="3" fill="#e02020"/></svg>
<svg style="left:387px;top:600px" width="16" height="16" viewBox="0 0 16 16" preserveAspectRatio="none"><rect x="1.2" y="2" width="1.6" height="1.6" fill="#2a2a2a"/><rect x="2.2" y="3" width="1.2" height="1.2" fill="#d8d8d8" fill-opacity=".7"/><rect x="1.2" y="8.1" width="1.6" height="1.6" fill="#2a2a2a"/><rect x="2.2" y="9.1" width="1.2" height="1.2" fill="#d8d8d8" fill-opacity=".7"/><rect x="1.2" y="14.2" width="1.6" height="1.6" fill="#2a2a2a"/><rect x="2.2" y="15.2" width="1.2" height="1.2" fill="#d8d8d8" fill-opacity=".7"/><rect x="7.2" y="2" width="1.6" height="1.6" fill="#2a2a2a"/><rect x="8.2" y="3" width="1.2" height="1.2" fill="#d8d8d8" fill-opacity=".7"/><rect x="7.2" y="8.1" width="1.6" height="1.6" fill="#2a2a2a"/><rect x="8.2" y="9.1" width="1.2" height="1.2" fill="#d8d8d8" fill-opacity=".7"/><rect x="7.2" y="14.2" width="1.6" height="1.6" fill="#2a2a2a"/><rect x="8.2" y="15.2" width="1.2" height="1.2" fill="#d8d8d8" fill-opacity=".7"/><rect x="13.2" y="2" width="1.6" height="1.6" fill="#2a2a2a"/><rect x="14.2" y="3" width="1.2" height="1.2" fill="#d8d8d8" fill-opacity=".7"/><rect x="13.2" y="8.1" width="1.6" height="1.6" fill="#2a2a2a"/><rect x="14.2" y="9.1" width="1.2" height="1.2" fill="#d8d8d8" fill-opacity=".7"/><rect x="13.2" y="14.2" width="1.6" height="1.6" fill="#2a2a2a"/><rect x="14.2" y="15.2" width="1.2" height="1.2" fill="#d8d8d8" fill-opacity=".7"/></svg>
<svg style="left:407px;top:600px" width="16" height="16" viewBox="0 0 16 16" preserveAspectRatio="none"><path d="M1 13.6H14" stroke="#d8d8d8" stroke-width="1"/><path d="M7.5 2V12.5M1 12.6H14" stroke="#1a50d0" stroke-width="1.2"/></svg>
<svg style="left:427px;top:600px" width="16" height="16" viewBox="0 0 16 16" preserveAspectRatio="none"><circle cx="7" cy="8" r="4.8" fill="#e8f0ff" stroke="#2050c0" stroke-width="1.6"/><path d="M9 6.5L15.5 .5" stroke="#111" stroke-width="1.2"/><path d="M7 8H14" stroke="#111" stroke-width="1"/><path d="M1.5 10L5 14.5L10.5 7" stroke="#18a028" stroke-width="2" fill="none"/></svg>
<div class="a rt" style="left:451px;top:600px;font-size:11.5px;letter-spacing:-.1px">(-19.29113; 0.8249496; 0)</div>
<div class="a rt" style="left:822px;top:600px;font-size:11px">297 x 210 x 0</div>
<svg style="left:882px;top:606px" width="10" height="10" viewBox="0 0 10 10" preserveAspectRatio="none"><rect x="7" y="1" width="2" height="2" fill="#333"/><rect x="4" y="4" width="2" height="2" fill="#333"/><rect x="7" y="4" width="2" height="2" fill="#333"/><rect x="1" y="7" width="2" height="2" fill="#333"/><rect x="4" y="7" width="2" height="2" fill="#333"/><rect x="7" y="7" width="2" height="2" fill="#333"/></svg>
<svg style="left:745px;top:565px" width="155" height="55" viewBox="0 0 155 55"><circle cx="25.5" cy="30.5" r="18.5" fill="#fff" fill-opacity=".95" stroke="#e6e6e6" stroke-width=".6"/><path d="M27 14Q35 11 32.5 3.5Q40 11 35.5 19Z" fill="#fff" fill-opacity=".95" stroke="#e9e9e9" stroke-width=".5"/><path d="M16.5 27.5L31.5 15.5M32.5 31.5L19.5 42" fill="none" stroke="#c9c9c9" stroke-width="1.5"/><path d="M18 29.5H31.5" stroke="#e4e4e4" stroke-width="1.2"/><circle cx="15" cy="29.5" r="2.8" fill="#fff" stroke="#bcbcbc" stroke-width="1.3"/><circle cx="34.5" cy="29.5" r="2.8" fill="#fff" stroke="#bcbcbc" stroke-width="1.3"/><text x="52" y="30.5" font-family="Noto Sans CJK SC,sans-serif" font-weight="900" font-size="17.5" fill="#fff" stroke="#d4d4d4" stroke-width="1.1" paint-order="stroke" transform="skewX(-12) translate(1.5 0)">电子发烧友</text><text x="48" y="44" font-family="Liberation Sans,sans-serif" font-weight="bold" font-size="11" fill="#fff" fill-opacity=".92" stroke="#d8d8d8" stroke-width=".3">www.elecfans.com</text></svg>
</body></html>
